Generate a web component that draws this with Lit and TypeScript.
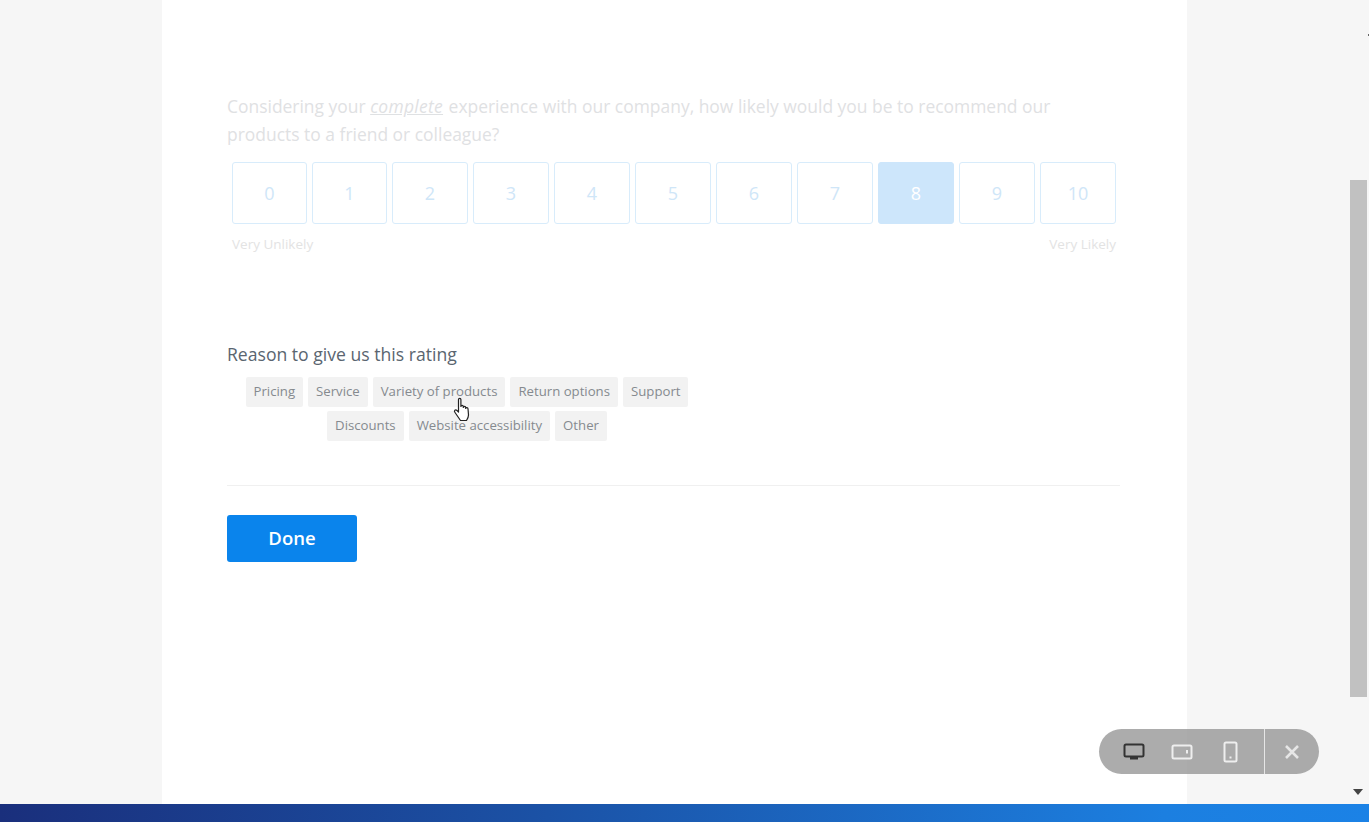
import { LitElement, html, css } from "lit";
import { customElement } from "lit/decorators.js";

const SCALE = ["0","1","2","3","4","5","6","7","8","9","10"];
const ROW1 = ["Pricing","Service","Variety of products","Return options","Support"];
const ROW2 = ["Discounts","Website accessibility","Other"];

@customElement("app-root")
export class AppRoot extends LitElement {
  static styles = css`
    :host { display:block; height:822px; width:100%; position:relative; overflow:hidden; background:#f6f6f6;
      font-family:"Open Sans","Noto Sans",sans-serif; }
    .shell { height:804px; display:flex; overflow:hidden; }
    .page { flex:1; min-width:0; padding-left:162px; }
    .card { width:1025px; height:804px; box-sizing:border-box; background:#fff; padding:92px 67px 0 65px; }
    .q { margin:0; max-width:860px; font-size:17.45px; line-height:28px; color:#dfe1e3; }
    .q em { text-decoration:underline; letter-spacing:.3px; padding-right:1px; }
    .scale { display:grid; grid-template-columns:75px 75px repeat(9,76px); gap:5px; margin:14px 0 0 5px; }
    .cell { height:62px; box-sizing:border-box; border:1px solid #d8ecfb; border-radius:3px; background:#fff;
      display:flex; align-items:center; justify-content:center; font-size:18px; color:#cfe6f8; padding-bottom:1px; }
    .cell.on { background:#cde6fb; border-color:#cde6fb; color:#fff; }
    .ends { display:flex; justify-content:space-between; margin:12px 4px 0 5px; font-size:13.5px; line-height:17px; color:#e3e3e3; }
    .label { margin:90px 0 0; font-size:17.6px; line-height:23px; color:#5a6570; }
    .chips { margin-top:11px; width:480px; display:flex; flex-direction:column; gap:4px; }
    .row { display:flex; justify-content:center; gap:5px; }
    .chip { height:30px; box-sizing:border-box; padding:0 8px 3px; background:#f2f2f2; border-radius:2px;
      display:flex; align-items:center; font-size:13.2px; color:#858a8f; white-space:nowrap; }
    hr { border:0; border-top:1px solid #f0f0f0; margin:44px 0 0; }
    .done { margin-top:29px; width:130px; height:47px; border:0; border-radius:3px; background:#0a84ec; color:#fff;
      font:600 18.5px "Open Sans","Noto Sans",sans-serif; display:block; padding:0 0 2px; }
    .bar { width:19px; position:relative; background:#f6f6f6; }
    .thumb { position:absolute; left:0; top:180px; width:17px; height:517px; background:#c1c1c1; }
    .arrow { position:absolute; left:3px; top:789px; width:0; height:0; border:5px solid transparent; border-top:6px solid #444; border-bottom:0; }
    .tick { position:absolute; right:0; top:34px; width:1px; height:2px; background:#666; }
    .foot { height:18px; background:linear-gradient(90deg,#1a2f7c 0%,#1b52a6 40%,#1c7fe0 85%,#1b82e6 100%); }
    .tool { position:absolute; left:1099px; top:729px; width:220px; height:45px; border-radius:23px; background:rgba(140,140,140,.72);
      display:flex; align-items:center; }
    .tool svg { display:block; }
    .ic { width:48px; display:flex; justify-content:center; }
    .icons { display:flex; width:166px; height:45px; align-items:center; box-sizing:border-box; padding-left:11px; border-right:1px solid #e6e6e6; }
    .x { flex:1; display:flex; justify-content:center; }
    .cursor { position:absolute; left:453px; top:397px; }
  `;

  render() {
    return html`
      <div class="shell">
        <div class="page">
          <div class="card">
            <p class="q">Considering your <em>complete</em> experience with our company, how likely would you be to recommend our products to a friend or colleague?</p>
            <div class="scale">
              ${SCALE.map(n => html`<div class="cell ${n === "8" ? "on" : ""}">${n}</div>`)}
            </div>
            <div class="ends"><span>Very Unlikely</span><span>Very Likely</span></div>
            <div class="label">Reason to give us this rating</div>
            <div class="chips">
              <div class="row">${ROW1.map(c => html`<div class="chip">${c}</div>`)}</div>
              <div class="row">${ROW2.map(c => html`<div class="chip">${c}</div>`)}</div>
            </div>
            <hr />
            <button class="done">Done</button>
          </div>
        </div>
        <div class="bar"><div class="tick"></div><div class="thumb"></div><div class="arrow"></div></div>
      </div>
      <div class="foot"></div>
      <div class="tool">
        <div class="icons">
          <div class="ic"><svg width="22" height="18" viewBox="0 0 22 18" fill="none"><rect x="1.5" y="1.5" width="19" height="12" rx="1.5" stroke="#333" stroke-width="2"/><rect x="7" y="14" width="8" height="2.5" fill="#333"/></svg></div>
          <div class="ic"><svg width="22" height="18" viewBox="0 0 22 18" fill="none"><rect x="1.5" y="2.5" width="19" height="13" rx="1.5" stroke="#eee" stroke-width="2"/><rect x="15" y="7" width="2" height="3.500" fill="#eee"/></svg></div>
          <div class="ic"><svg width="15" height="22" viewBox="0 0 15 22" fill="none"><rect x="1.5" y="1.500" width="12" height="19" rx="1.5" stroke="#eee" stroke-width="2"/><rect x="6.500" y="15.500" width="2" height="2" fill="#eee"/></svg></div>
        </div>
        <div class="x"><svg width="16" height="16" viewBox="0 0 16 16"><path d="M2 2L14 14M14 2L2 14" stroke="#e6e6e6" stroke-width="2.600"/></svg></div>
      </div>
      <svg class="cursor" width="19" height="26" viewBox="0 0 19 26"><path d="M5.5 2.5c0-1.600 2.400-1.600 2.400 0v7c0-1.400 2.400-1.400 2.400 0v1c0-1.400 2.400-1.400 2.400 0v1c0-1.300 2.300-1.300 2.300 0.200l.5 6.300c0 2.500-1 4-2 5.500H7.500L2 15.500c-1.500-2 .5-3.500 2-2l1.500 1.500z" fill="#fff" stroke="#222" stroke-width="1.200" stroke-linejoin="round"/></svg>
    `;
  }
}
